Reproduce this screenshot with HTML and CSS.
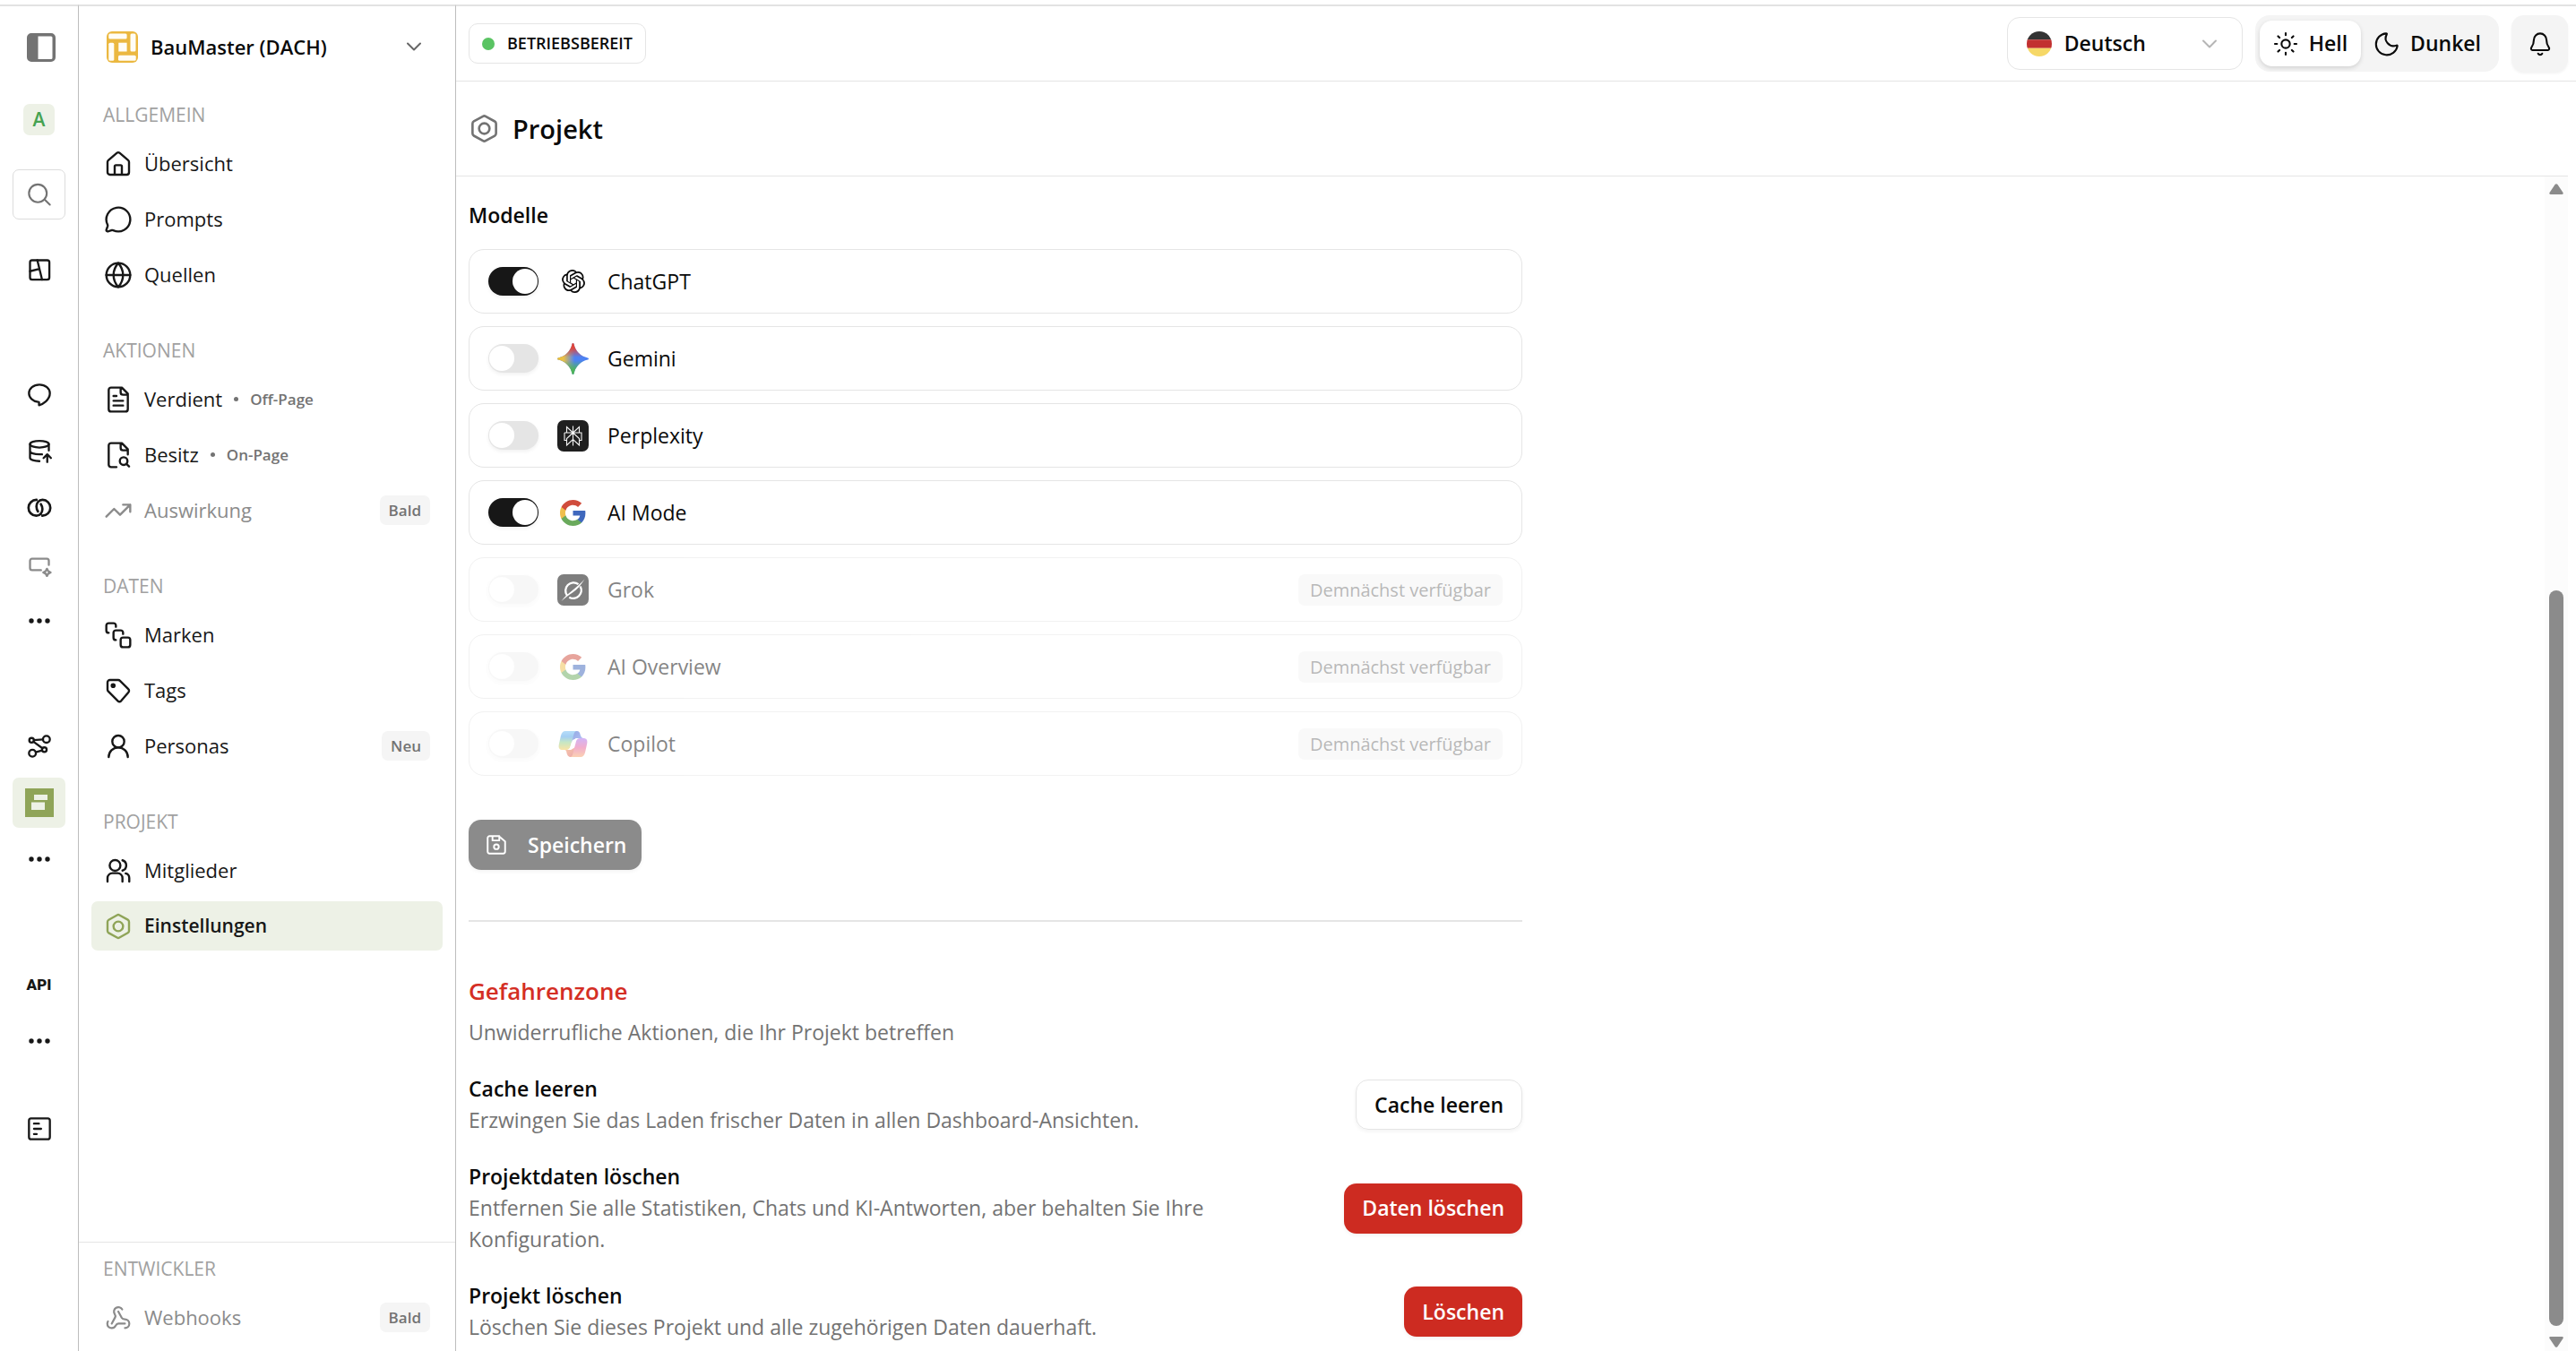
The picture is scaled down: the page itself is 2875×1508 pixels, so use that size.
FILE: index.html
```html
<!DOCTYPE html>
<html lang="de">
<head>
<meta charset="utf-8">
<meta name="viewport" content="width=device-width, initial-scale=1">
<title>Projekt – Einstellungen</title>
<link rel="stylesheet" href="styles.css">
</head>
<body>
<svg class="defs" aria-hidden="true">
  <defs>
    <symbol id="i-dots" viewBox="0 0 28 28"><g fill="currentColor" stroke="none"><circle cx="5" cy="14" r="2.7"/><circle cx="14" cy="14" r="2.7"/><circle cx="23" cy="14" r="2.7"/></g></symbol>
    <symbol id="i-nut" viewBox="0 0 24 24"><path d="M11 2.6a2 2 0 0 1 2 0l7 3.9a2 2 0 0 1 1 1.7v7.6a2 2 0 0 1-1 1.7l-7 3.9a2 2 0 0 1-2 0l-7-3.9a2 2 0 0 1-1-1.7V8.200a2 2 0 0 1 1-1.700z"/><circle cx="12" cy="12" r="4"/></symbol>
    <symbol id="i-chevron" viewBox="0 0 24 24"><path d="m5 8.500 7 7 7-7"/></symbol>
    <symbol id="i-google" viewBox="0 0 24 24"><g stroke="none"><path fill="#3f68bd" d="M23.500 12.270c0-.79-.07-1.540-.19-2.270H12v4.510h6.470c-.29 1.480-1.140 2.730-2.400 3.580v3h3.860c2.260-2.090 3.570-5.170 3.570-8.820z"/><path fill="#6aaa5c" d="M12 24c3.240 0 5.950-1.080 7.930-2.910l-3.860-3c-1.080.72-2.450 1.160-4.070 1.160-3.130 0-5.780-2.110-6.730-4.960H1.290v3.090C3.260 21.300 7.310 24 12 24z"/><path fill="#efbf4c" d="M5.270 14.290c-.25-.72-.38-1.490-.38-2.290s.14-1.570.38-2.290V6.620H1.290C.470 8.240 0 10.060 0 12s.470 3.760 1.290 5.380l3.980-3.090z"/><path fill="#d04c3c" d="M12 4.750c1.770 0 3.350.61 4.600 1.800l3.420-3.420C17.950 1.190 15.240 0 12 0 7.310 0 3.260 2.700 1.290 6.620l3.980 3.090c.95-2.850 3.600-4.960 6.730-4.960z"/></g></symbol>
    <path id="star" d="M12 0c.4 0 .6.300.7.700A13.500 13.500 0 0 0 23.300 11.300c.4.1.7.300.7.700s-.300.600-.700.700A13.500 13.500 0 0 0 12.700 23.300c-.1.400-.300.700-.700.700s-.600-.300-.700-.700A13.500 13.500 0 0 0 .700 12.700C.300 12.600 0 12.400 0 12s.300-.600.700-.700A13.500 13.500 0 0 0 11.300.700c.1-.4.300-.7.700-.7z"/>
    <linearGradient id="g-red" x1="0" y1="0" x2="0" y2="1"><stop offset="0" stop-color="#e0453a"/><stop offset=".15" stop-color="#e0453a"/><stop offset=".45" stop-color="#e0453a" stop-opacity="0"/></linearGradient>
    <linearGradient id="g-green" x1="0" y1="1" x2="0" y2="0"><stop offset="0" stop-color="#4fb45a"/><stop offset=".15" stop-color="#4fb45a"/><stop offset=".45" stop-color="#4fb45a" stop-opacity="0"/></linearGradient>
    <linearGradient id="g-yellow" x1="0" y1="0" x2="1" y2="0"><stop offset="0" stop-color="#f0c02e"/><stop offset=".2" stop-color="#e8bf4a"/><stop offset=".55" stop-color="#e8c24c" stop-opacity="0"/></linearGradient>
    <linearGradient id="c-left" x1="0" y1="0" x2="0" y2="1"><stop offset="0" stop-color="#6fbcf5"/><stop offset=".3" stop-color="#4ca0e8"/><stop offset=".6" stop-color="#8fd08a"/><stop offset="1" stop-color="#f6c94e"/></linearGradient>
    <linearGradient id="c-right" x1="0" y1="0" x2="0" y2="1"><stop offset="0" stop-color="#a66bf0"/><stop offset=".5" stop-color="#e65f9a"/><stop offset="1" stop-color="#f8a567"/></linearGradient>
    <linearGradient id="c-top" x1="0" y1="0" x2="1" y2="1"><stop offset="0" stop-color="#2a56c8"/><stop offset="1" stop-color="#6f8af0"/></linearGradient>
    <linearGradient id="c-bottom" x1="0" y1="0" x2="1" y2="1"><stop offset="0" stop-color="#f29a55"/><stop offset="1" stop-color="#d94d5c"/></linearGradient>
    <clipPath id="round"><circle cx="14" cy="14" r="14"/></clipPath>
  </defs>
</svg>

<div class="app">
  <nav class="rail" aria-label="Arbeitsbereich">
    <button class="rail-btn rail-panel" type="button" aria-label="Seitenleiste umschalten">
      <svg width="32" height="32" viewBox="0 0 32 32"><path fill="#737373" fill-rule="evenodd" d="M5 0h22a5 5 0 0 1 5 5v22a5 5 0 0 1-5 5H5a5 5 0 0 1-5-5V5a5 5 0 0 1 5-5zm7.500 3.500v25.500H27a1.500 1.500 0 0 0 1.500-1.500V5A1.500 1.500 0 0 0 27 3.500z"/></svg>
    </button>
    <button class="avatar" type="button">A</button>
    <button class="rail-btn rail-search" type="button" aria-label="Suche">
      <svg class="icon" width="28" height="28" viewBox="0 0 24 24"><circle cx="10.500" cy="11" r="8.500"/><path d="m17 17 5 4.800"/></svg>
    </button>
    <button class="rail-btn" type="button" aria-label="Layout">
      <svg class="icon rail-icon" width="28" height="28" viewBox="0 0 24 24"><rect x="3" y="3" width="18.500" height="18.500" rx="2"/><path d="M10 3l4.500 18.500M3 13.500l9-2.200"/></svg>
    </button>
    <div class="rail-group">
      <button class="rail-btn" type="button" aria-label="Chats">
        <svg class="icon rail-icon" width="28" height="28" viewBox="0 0 24 24"><path d="M12 2C6.300 2 2 5.700 2 10.300c0 4.200 3.600 7.500 8.600 8.200l1 .2v3c3.500-1 10.400-5 10.400-11.400C22 5.700 17.700 2 12 2z"/></svg>
      </button>
      <button class="rail-btn" type="button" aria-label="Datenbank">
        <svg class="icon rail-icon" width="28" height="28" viewBox="0 0 24 24"><ellipse cx="12" cy="5" rx="9" ry="3.200"/><path d="M3 5v13c0 1.800 4 3.200 9 3.200M21 5v6M3 11.500c0 1.800 4 3.200 9 3.200h2.500M19.500 22v-7M16 18.200l3.500-3.500 3.500 3.500"/></svg>
      </button>
      <button class="rail-btn" type="button" aria-label="Verknüpfungen">
        <svg class="icon rail-icon" width="32" height="32" viewBox="0 0 24 24"><path d="M9.600 5.200a6.600 6.600 0 1 0-.2 13.300c3.300 0 5.100-2.800 5.100-5.500 0-1.800-.6-3.200-1.300-4.200M14.400 18.500a6.600 6.600 0 1 0 .2-13.300c-3.300 0-5.100 2.800-5.100 5.500 0 1.800.6 3.200 1.300 4.200"/></svg>
      </button>
      <button class="rail-btn rail-muted" type="button" aria-label="Assistent">
        <svg class="icon rail-icon" width="28" height="28" viewBox="0 0 24 24"><path d="M13.500 17.500H5a2 2 0 0 1-2-2V8.500a2 2 0 0 1 2-2h14a2 2 0 0 1 2 2v4"/><path d="M19.200 16.200l1.200 2.300 2.300 1.200-2.300 1.200-1.200 2.300-1.200-2.300-2.300-1.200 2.300-1.200z"/></svg>
      </button>
      <button class="rail-btn" type="button" aria-label="Mehr"><svg width="28" height="28"><use href="#i-dots"/></svg></button>
    </div>
    <div class="rail-group">
      <button class="rail-btn" type="button" aria-label="Abläufe">
        <svg class="icon rail-icon" width="28" height="28" viewBox="0 0 24 24"><circle cx="4.500" cy="6.300" r="2.200"/><circle cx="18.700" cy="5.300" r="3.300"/><circle cx="5.300" cy="18.600" r="3.300"/><circle cx="16.700" cy="15.300" r="2.200"/><path d="M6.700 6.100l8.700-.6M6.300 7.600l8.600 6.300M8.500 17.600l6-1.700"/></svg>
      </button>
      <button class="rail-btn rail-active" type="button" aria-label="Projekt" aria-current="true">
        <svg width="32" height="32" viewBox="0 0 32 32"><path fill="#8fa458" d="M0 0h32v32H0z"/><path fill="#edf1e6" d="M10 7h15v6H10zM7 15.500h15V24H7z"/></svg>
      </button>
      <button class="rail-btn" type="button" aria-label="Mehr"><svg width="28" height="28"><use href="#i-dots"/></svg></button>
    </div>
    <div class="rail-group">
      <button class="rail-btn rail-api" type="button">API</button>
      <button class="rail-btn" type="button" aria-label="Mehr"><svg width="28" height="28"><use href="#i-dots"/></svg></button>
    </div>
    <button class="rail-btn rail-last" type="button" aria-label="Protokoll">
      <svg class="icon rail-icon" width="28" height="28" viewBox="0 0 24 24"><rect x="2" y="2" width="20" height="20" rx="2"/><path d="M6.800 7h4.700M6.800 12h6.800M6.800 17h2.600"/></svg>
    </button>
  </nav>

  <aside class="sidebar">
    <button class="project-switch" type="button">
      <svg width="35" height="35" viewBox="0 0 35 35"><rect width="35" height="35" rx="6" fill="#ebb840"/><g fill="#fffdf6"><rect x="2.300" y="2.500" width="20.300" height="6" rx="1.500"/><rect x="26.500" y="2.500" width="6" height="20" rx="1.500"/><rect x="2.300" y="12.700" width="6" height="20" rx="1.500"/><rect x="13.300" y="12.700" width="9.300" height="9.800"/><rect x="13" y="26.700" width="19.700" height="6" rx="1.500"/></g></svg>
      <span>BauMaster (DACH)</span>
      <svg class="icon switch-chevron" width="24" height="24"><use href="#i-chevron"/></svg>
    </button>
    <div class="nav-groups">
      <section class="nav-group">
        <h2>Allgemein</h2>
        <a class="nav-item" href="#uebersicht"><svg class="icon" width="32" height="32" viewBox="0 0 24 24"><path d="M3 10.500a2 2 0 0 1 .7-1.600l7-6a2 2 0 0 1 2.600 0l7 6a2 2 0 0 1 .7 1.600V19a2 2 0 0 1-2 2H5a2 2 0 0 1-2-2zM9 21v-7a1 1 0 0 1 1-1h4a1 1 0 0 1 1 1v7"/></svg><span>Übersicht</span></a>
        <a class="nav-item" href="#prompts"><svg class="icon" width="32" height="32" viewBox="0 0 24 24"><path d="M3 16.340a2 2 0 0 1 .1 1.170l-1.070 3.290a1 1 0 0 0 1.240 1.170l3.410-1a2 2 0 0 1 1.100.09A10 10 0 1 0 3 16.340"/></svg><span>Prompts</span></a>
        <a class="nav-item" href="#quellen"><svg class="icon" width="32" height="32" viewBox="0 0 24 24"><circle cx="12" cy="12" r="10"/><path d="M12 2c-5.300 6-5.300 14 0 20 5.300-6 5.300-14 0-20M2 12h20"/></svg><span>Quellen</span></a>
      </section>
      <section class="nav-group">
        <h2>Aktionen</h2>
        <a class="nav-item" href="#verdient"><svg class="icon" width="32" height="32" viewBox="0 0 24 24"><path d="M15 2H6a2 2 0 0 0-2 2v16a2 2 0 0 0 2 2h12a2 2 0 0 0 2-2V7zM14 2v4a2 2 0 0 0 2 2h4M8 9h2.500M8 13h8M8 17h8"/></svg><span>Verdient</span><i class="dot"></i><small>Off-Page</small></a>
        <a class="nav-item" href="#besitz"><svg class="icon" width="32" height="32" viewBox="0 0 24 24"><path d="M14 2v4a2 2 0 0 0 2 2h4M10.500 22H6a2 2 0 0 1-2-2V4a2 2 0 0 1 2-2h9l5 5v4.500M21 21.500 18.800 19.300"/><circle cx="16.500" cy="17" r="3.200"/></svg><span>Besitz</span><i class="dot"></i><small>On-Page</small></a>
        <a class="nav-item nav-soon" href="#auswirkung"><svg class="icon" width="32" height="32" viewBox="0 0 24 24"><path d="M16 7h6v6M22 7l-8.500 8.500-5-5L2 17"/></svg><span>Auswirkung</span><b class="badge">Bald</b></a>
      </section>
      <section class="nav-group">
        <h2>Daten</h2>
        <a class="nav-item" href="#marken"><svg class="icon" width="32" height="32" viewBox="0 0 24 24"><rect x="14" y="14" width="8" height="8" rx="2"/><path d="M10 5V4a2 2 0 0 0-2-2H4a2 2 0 0 0-2 2v4a2 2 0 0 0 2 2M16 11v-1a2 2 0 0 0-2-2h-4a2 2 0 0 0-2 2v4a2 2 0 0 0 2 2"/></svg><span>Marken</span></a>
        <a class="nav-item" href="#tags"><svg class="icon" width="32" height="32" viewBox="0 0 24 24"><path d="M12 3a2 2 0 0 1 1.400.6l7 7a2 2 0 0 1 0 2.900l-6 7a2 2 0 0 1-2.800 0l-8-8A2 2 0 0 1 3 11V5a2 2 0 0 1 2-2z"/><circle cx="7.700" cy="7.700" r="1.200" fill="currentColor"/></svg><span>Tags</span></a>
        <a class="nav-item" href="#personas"><svg class="icon" width="32" height="32" viewBox="0 0 24 24"><circle cx="12" cy="8" r="5"/><path d="M20 21a8 8 0 0 0-16 0"/></svg><span>Personas</span><b class="badge">Neu</b></a>
      </section>
      <section class="nav-group">
        <h2>Projekt</h2>
        <a class="nav-item" href="#mitglieder"><svg class="icon" width="32" height="32" viewBox="0 0 24 24"><path d="M15.500 21v-3a4 4 0 0 0-4-4H7a4 4 0 0 0-4 4v3M15.500 3.200a4.500 4.500 0 0 1 0 8.600M21.200 21v-3a4 4 0 0 0-3-3.800"/><circle cx="9.300" cy="7.500" r="4.500"/></svg><span>Mitglieder</span></a>
        <a class="nav-item nav-current" href="#einstellungen" aria-current="page"><svg class="icon" width="32" height="32"><use href="#i-nut"/></svg><span>Einstellungen</span></a>
      </section>
    </div>
    <section class="nav-group nav-footer">
      <h2>Entwickler</h2>
      <a class="nav-item nav-soon" href="#webhooks"><svg class="icon" width="32" height="32" viewBox="0 0 24 24"><g transform="translate(1 1.200) scale(.92)"><path d="M18 16.980h-5.990c-1.100 0-1.950.94-2.480 1.900A4 4 0 0 1 2 17c.01-.7.200-1.400.57-2"/><path d="m6 17 3.130-5.780c.53-.97.100-2.180-.5-3.100a4 4 0 1 1 6.890-4.060"/><path d="m12 6 3.130 5.730C15.660 12.700 16.900 13 18 13a4 4 0 0 1 0 8"/></g></svg><span>Webhooks</span><b class="badge">Bald</b></a>
    </section>
  </aside>

  <main class="main">
    <header class="topbar">
      <div class="status"><i></i>BETRIEBSBEREIT</div>
      <div class="tools">
        <div class="language">
          <svg width="28" height="28" viewBox="0 0 28 28"><g clip-path="url(#round)"><path fill="#333" d="M0 0h28v9.300H0z"/><path fill="#c23030" d="M0 9.300h28v9.400H0z"/><path fill="#f6d867" d="M0 18.700h28V28H0z"/></g></svg>
          <select aria-label="Sprache"><option>Deutsch</option><option>English</option></select>
          <svg class="icon language-chevron" width="24" height="24"><use href="#i-chevron"/></svg>
        </div>
        <div class="theme" role="group" aria-label="Farbschema">
          <button class="theme-on" type="button" aria-pressed="true"><svg class="icon" width="28" height="28" viewBox="0 0 24 24"><circle cx="12" cy="12" r="4"/><path d="M12 1.700v2M12 20.300v2M1.700 12h2M20.300 12h2M4.700 4.700l1.400 1.400M17.900 17.900l1.400 1.400M4.700 19.300l1.400-1.400M17.900 6.100l1.400-1.400"/></svg>Hell</button>
          <button type="button" aria-pressed="false"><svg class="icon" width="28" height="28" viewBox="0 0 24 24"><path d="M22 14A10.300 10.300 0 1 1 11.200 2c.7 0 .9.300.6.900A7.400 7.400 0 0 0 21 13.400c.7-.3 1.100-.1 1 .6z"/></svg>Dunkel</button>
        </div>
        <button class="bell" type="button" aria-label="Benachrichtigungen"><svg class="icon" width="28" height="28" viewBox="0 0 24 24"><path d="M12 2a6 6 0 0 0-6 6c0 4-1 5.700-2.400 7.600-.6.900-.2 2.400 1 2.400h14.800c1.200 0 1.600-1.500 1-2.400C19 13.700 18 12 18 8a6 6 0 0 0-6-6zM10 21.300a2.300 2.300 0 0 0 4 0"/></svg></button>
      </div>
    </header>

    <div class="page">
      <div class="page-title">
        <svg class="icon" width="35" height="35"><use href="#i-nut"/></svg>
        <h1>Projekt</h1>
      </div>
      <div class="page-body">
        <form class="settings">
          <h2 class="section-title">Modelle</h2>
          <ul class="models">
            <li><label class="model"><input type="checkbox" role="switch" checked><span class="logo"><svg width="26" height="26" viewBox="0 0 24 24"><path fill="#0a0a0a" d="M22.2819 9.8211a5.9847 5.9847 0 0 0-.5157-4.9108 6.0462 6.0462 0 0 0-6.5098-2.9A6.0651 6.0651 0 0 0 4.9807 4.1818a5.9847 5.9847 0 0 0-3.9977 2.9 6.0462 6.0462 0 0 0 .7427 7.0966 5.98 5.98 0 0 0 .511 4.9107 6.051 6.051 0 0 0 6.5146 2.9001A5.9847 5.9847 0 0 0 13.2599 24a6.0557 6.0557 0 0 0 5.7718-4.2058 5.9894 5.9894 0 0 0 3.9977-2.9001 6.0557 6.0557 0 0 0-.7475-7.0729zm-9.022 12.6081a4.4755 4.4755 0 0 1-2.8764-1.0408l.1419-.0804 4.7783-2.7582a.7948.7948 0 0 0 .3927-.6813v-6.7369l2.02 1.1686a.071.071 0 0 1 .038.052v5.5826a4.504 4.504 0 0 1-4.4945 4.4944zm-9.6607-4.1254a4.4708 4.4708 0 0 1-.5346-3.0137l.142.0852 4.783 2.7582a.7712.7712 0 0 0 .7806 0l5.8428-3.3685v2.3324a.0804.0804 0 0 1-.0332.0615L9.74 19.9502a4.4992 4.4992 0 0 1-6.1408-1.6464zM2.3408 7.8956a4.485 4.485 0 0 1 2.3655-1.9728V11.6a.7664.7664 0 0 0 .3879.6765l5.8144 3.3543-2.0201 1.1685a.0757.0757 0 0 1-.071 0l-4.8303-2.7865A4.504 4.504 0 0 1 2.3408 7.872zm16.5963 3.8558L13.1038 8.364 15.1192 7.2a.0757.0757 0 0 1 .071 0l4.8303 2.7913a4.4944 4.4944 0 0 1-.6765 8.1042v-5.6772a.79.79 0 0 0-.407-.667zm2.0107-3.0231l-.142-.0852-4.7735-2.7818a.7759.7759 0 0 0-.7854 0L9.409 9.2297V6.8974a.0662.0662 0 0 1 .0284-.0615l4.8303-2.7866a4.4992 4.4992 0 0 1 6.6802 4.66zM8.3065 12.863l-2.02-1.1638a.0804.0804 0 0 1-.038-.0567V6.0742a4.4992 4.4992 0 0 1 7.3757-3.4537l-.142.0805L8.704 5.459a.7948.7948 0 0 0-.3927.6813zm1.0976-2.3654l2.602-1.4998 2.6069 1.4998v2.9994l-2.5974 1.4997-2.6067-1.4997Z"/></svg></span><span>ChatGPT</span></label></li>
            <li><label class="model"><input type="checkbox" role="switch"><span class="logo"><svg width="35" height="35" viewBox="0 0 24 24"><use href="#star" fill="#4d82f3"/><use href="#star" fill="url(#g-yellow)"/><use href="#star" fill="url(#g-red)"/><use href="#star" fill="url(#g-green)"/></svg></span><span>Gemini</span></label></li>
            <li><label class="model"><input type="checkbox" role="switch"><span class="logo"><svg width="35" height="35" viewBox="0 0 35 35"><rect width="35" height="35" rx="7" fill="#1f1f1f"/><path fill="none" stroke="#f4f4f4" stroke-width="1.100" d="M17.500 6.500v22M17.500 14l-7-6.500V14M17.500 14l7-6.500V14M8 14h19v8.500h-2.500M8 14v8.500h2.500M17.500 14l-7 6.500v7.500l7-6.500 7 6.500v-7.500z"/></svg></span><span>Perplexity</span></label></li>
            <li><label class="model"><input type="checkbox" role="switch" checked><span class="logo"><svg width="29" height="29"><use href="#i-google"/></svg></span><span>AI Mode</span></label></li>
            <li><label class="model model-off"><input type="checkbox" role="switch" disabled><span class="logo"><svg width="35" height="35" viewBox="0 0 35 35"><rect width="35" height="35" rx="7" fill="#000"/><g fill="none" stroke="#fff" stroke-width="2.400"><path d="M11 23.800a9 9 0 0 1 12.500-12.700M25.600 13.500A9 9 0 0 1 13.300 25.700"/></g><path fill="#fff" d="M30.500 5.500C26 12.500 22 17.200 17 20.500c-4 2.700-8 5.500-12.500 9.500 4-5.500 8-8.500 12-11.800C21 14.500 25.500 11 30.500 5.500z"/></svg></span><span>Grok</span><b class="model-badge">Demnächst verfügbar</b></label></li>
            <li><label class="model model-off"><input type="checkbox" role="switch" disabled><span class="logo"><svg width="29" height="29"><use href="#i-google"/></svg></span><span>AI Overview</span><b class="model-badge">Demnächst verfügbar</b></label></li>
            <li><label class="model model-off"><input type="checkbox" role="switch" disabled><span class="logo"><svg width="35" height="35" viewBox="0 0 35 35"><path fill="url(#c-top)" d="M17 3h5c2 0 3 1.500 3.500 3.500S27 11 29 11h-8.500L16 16z"/><path fill="url(#c-bottom)" d="M8 24c2 0 2 1.500 2.500 3.500S12 32 15 32h3l4-12-7 4z"/><path fill="url(#c-left)" d="M9 3h13c-2 0-3 1.500-3.500 3.500l-4 14c-.7 2.300-2 3.500-4.500 3.500H6c-3.500 0-5-2-4.200-6L4 8c1-3.500 2.500-5 5-5z"/><path fill="url(#c-right)" d="M26 32H14c2 0 2.800-1.500 3.300-3.500l3.700-14c.7-2.300 2-3.500 4.500-3.500H29c3.500 0 5 2 4.200 6L31 27c-1 3.500-2.500 5-5 5z"/><path fill="#fff" d="M20.500 12c-1 1-1.500 2-2 4l-1.500 5c-.6 1.800-1.500 3-4 3h-1.500c2-.5 2.500-2 3-3.500l1.500-5c.6-2 1.500-3.500 4.500-3.500z"/></svg></span><span>Copilot</span><b class="model-badge">Demnächst verfügbar</b></label></li>
          </ul>
          <button class="btn btn-save" type="submit" disabled>
            <svg class="icon" width="26" height="26" viewBox="0 0 24 24"><path d="M14.500 3H5a2 2 0 0 0-2 2v14a2 2 0 0 0 2 2h14a2 2 0 0 0 2-2V8.500zM8 3v4.500h7V3"/><circle cx="12" cy="14" r="2.500"/></svg>Speichern</button>
        </form>
        <section class="danger">
          <h2>Gefahrenzone</h2>
          <p class="hint">Unwiderrufliche Aktionen, die Ihr Projekt betreffen</p>
          <div class="danger-row">
            <div class="danger-text"><h3>Cache leeren</h3><p>Erzwingen Sie das Laden frischer Daten in allen Dashboard-Ansichten.</p></div>
            <button class="btn btn-outline" type="button">Cache leeren</button>
          </div>
          <div class="danger-row">
            <div class="danger-text"><h3>Projektdaten löschen</h3><p>Entfernen Sie alle Statistiken, Chats und KI-Antworten, aber behalten Sie Ihre Konfiguration.</p></div>
            <button class="btn btn-red" type="button">Daten löschen</button>
          </div>
          <div class="danger-row">
            <div class="danger-text"><h3>Projekt löschen</h3><p>Löschen Sie dieses Projekt und alle zugehörigen Daten dauerhaft.</p></div>
            <button class="btn btn-red" type="button">Löschen</button>
          </div>
        </section>
        <div class="scrollbar" aria-hidden="true">
          <svg width="16" height="12" viewBox="0 0 16 12"><path d="M6.500 1a2 2 0 0 1 3 0l6 9c.6 1 0 2-1 2h-13c-1 0-1.600-1-1-2z"/></svg>
          <span class="thumb"></span>
          <svg width="16" height="12" viewBox="0 0 16 12"><path d="M6.500 11a2 2 0 0 0 3 0l6-9c.6-1 0-2-1-2h-13c-1 0-1.600 1-1 2z"/></svg>
        </div>
      </div>
    </div>
  </main>
</div>
</body>
</html>
```
FILE: styles.css
```css
* { box-sizing: border-box; }

body {
  margin: 0;
  background: #fff;
  color: #0a0a0a;
  font-family: "Open Sans", "Noto Sans", sans-serif;
  font-size: 23px;
  line-height: 35px;
}

h1, h2, h3, p, ul { margin: 0; padding: 0; }
h1, h2, h3 { font-weight: 600; }
ul { list-style: none; }
a { color: inherit; text-decoration: none; }

button, select {
  font: inherit;
  color: inherit;
  border: 0;
  background: none;
  padding: 0;
}

svg { display: block; flex: none; }
.defs { position: absolute; width: 0; height: 0; }

.icon {
  fill: none;
  stroke: currentColor;
  stroke-width: 1.8;
  stroke-linecap: round;
  stroke-linejoin: round;
}

.app {
  display: flex;
  height: 100vh;
  min-height: 1000px;
  padding-top: 5px;
  overflow: hidden;
}

.rail, .sidebar, .main { border-top: 2px solid #e2e2e2; }

/* Icon rail */
.rail {
  display: flex;
  flex: none;
  flex-direction: column;
  align-items: center;
  width: 88px;
  padding-top: 18px;
  border-right: 1px solid #bdbdbd;
  color: #171717;
}

.rail-btn {
  display: flex;
  flex: none;
  align-items: center;
  justify-content: center;
  width: 59px;
  height: 56px;
  border-radius: 7px;
}

.rail-icon { stroke-width: 2; }
.rail-panel { margin-left: 5px; }

.avatar {
  flex: none;
  width: 35px;
  height: 35px;
  margin: 35px 0 38px;
  border-radius: 7px;
  background: #edf1e6;
  color: #45a251;
  font-size: 21px;
  font-weight: 600;
}

.rail-search {
  margin-bottom: 28px;
  border: 1px solid #dcdcdc;
  color: #737373;
}

.rail-group {
  display: flex;
  flex: none;
  flex-direction: column;
  gap: 7px;
  margin-top: 84px;
}

.rail-muted { color: #8b8b8b; }
.rail-active { background: #edf1e6; }

.rail-api {
  font-family: Roboto, "Liberation Sans", sans-serif;
  font-size: 17px;
  font-weight: 900;
}

.rail-last { margin-top: 42px; }

/* Sidebar */
.sidebar {
  display: flex;
  flex: none;
  flex-direction: column;
  width: 421px;
  border-right: 1px solid #bdbdbd;
}

.project-switch {
  display: flex;
  align-items: center;
  gap: 14px;
  height: 90px;
  padding: 0 34px 0 31px;
  font-size: 22px;
  font-weight: 600;
}

.switch-chevron {
  margin-left: auto;
  color: #666;
  stroke-width: 2;
}

.nav-groups {
  display: flex;
  flex: 1;
  flex-direction: column;
  gap: 43px;
  padding: 17px 14px 0;
}

.nav-group {
  display: flex;
  flex-direction: column;
  gap: 7px;
}

.nav-group h2 {
  margin-bottom: 6px;
  padding-left: 13px;
  color: #a1a1a1;
  font-size: 21px;
  font-weight: 400;
  line-height: 28px;
  text-transform: uppercase;
}

.nav-item {
  display: flex;
  align-items: center;
  gap: 13px;
  height: 55px;
  padding: 0 14px;
  border-radius: 7px;
  color: #171717;
  font-size: 22px;
}

.nav-item small {
  color: #737373;
  font-size: 17px;
  font-weight: 600;
}

.nav-item .dot {
  width: 5px;
  height: 5px;
  border-radius: 50%;
  background: #737373;
}

.nav-soon { color: #8b8b8b; }

.nav-current {
  background: #edf1e6;
  font-size: 21px;
  font-weight: 600;
}

.nav-current .icon { color: #8fa458; }

.badge {
  margin-left: auto;
  padding: 0 10px;
  border-radius: 7px;
  background: #f5f5f5;
  color: #737373;
  font-size: 17px;
  font-weight: 600;
  line-height: 33px;
}

.nav-footer {
  padding: 15px 14px 10px;
  border-top: 1px solid #e5e5e5;
}

/* Main column */
.main {
  display: flex;
  flex: 1;
  flex-direction: column;
  min-width: 0;
}

.topbar {
  display: flex;
  flex: none;
  align-items: center;
  justify-content: space-between;
  height: 84px;
  padding: 0 9px 0 14px;
  border-bottom: 1px solid #e5e5e5;
}

.status {
  display: flex;
  align-items: center;
  gap: 14px;
  height: 45px;
  padding: 0 14px;
  border: 1px solid #e5e5e5;
  border-radius: 10px;
  font-size: 18px;
  font-weight: 600;
}

.status i {
  width: 14px;
  height: 14px;
  border-radius: 50%;
  background: #5ac463;
}

.tools {
  display: flex;
  align-items: center;
  gap: 14px;
  font-weight: 600;
}

.language {
  display: flex;
  position: relative;
  align-items: center;
  width: 263px;
  height: 59px;
  padding-left: 21px;
  border: 1px solid #e5e5e5;
  border-radius: 14px;
}

.language select {
  flex: 1;
  height: 100%;
  padding-left: 14px;
  appearance: none;
}

.language-chevron {
  position: absolute;
  right: 24px;
  color: #b5b5b5;
  stroke-width: 2;
  pointer-events: none;
}

.theme {
  display: flex;
  height: 63px;
  padding: 6px 5px;
  border-radius: 16px;
  background: #f4f4f4;
}

.theme button {
  display: flex;
  align-items: center;
  gap: 12px;
  padding: 0 15px;
  border-radius: 14px;
}

.theme .theme-on {
  background: #fff;
  box-shadow: 0 2px 5px rgba(0, 0, 0, .14);
}

.bell {
  display: flex;
  align-items: center;
  justify-content: center;
  width: 63px;
  height: 63px;
  border-radius: 14px;
  background: #f4f4f4;
  box-shadow: 0 2px 3px rgba(0, 0, 0, .05);
}

.page {
  display: flex;
  flex: 1;
  flex-direction: column;
  min-height: 0;
  margin-right: 9px;
}

.page-title {
  display: flex;
  flex: none;
  align-items: center;
  gap: 14px;
  height: 106px;
  padding-left: 14px;
  border-bottom: 1px solid #e5e5e5;
}

.page-title .icon { color: #737373; }

.page-title h1 {
  font-size: 29px;
  line-height: 42px;
}

.page-body {
  position: relative;
  flex: 1;
  min-height: 0;
  padding: 26px 40px 10px 14px;
  overflow: hidden;
}

.settings, .danger { max-width: 1176px; }

.section-title {
  margin-bottom: 20px;
  font-size: 23px;
}

.models {
  display: flex;
  flex-direction: column;
  gap: 14px;
}

.model {
  display: flex;
  align-items: center;
  gap: 21px;
  height: 72px;
  padding: 0 21px;
  border: 1px solid #e5e5e5;
  border-radius: 17px;
}

.model input {
  display: flex;
  flex: none;
  align-items: center;
  width: 56px;
  height: 32px;
  margin: 0;
  padding: 0 1px;
  border-radius: 16px;
  background: #e5e5e5;
  box-shadow: 0 2px 4px rgba(0, 0, 0, .06);
  appearance: none;
}

.model input::before {
  width: 28px;
  height: 28px;
  border-radius: 50%;
  background: #fff;
  content: "";
}

.model input:checked {
  justify-content: flex-end;
  background: #171717;
}

.logo {
  display: flex;
  flex: none;
  align-items: center;
  justify-content: center;
  width: 35px;
  height: 35px;
}

.model-off { opacity: .5; }
.model-off input { opacity: .5; }

.model-badge {
  margin-left: auto;
  padding: 0 13px;
  border-radius: 7px;
  background: #f5f5f5;
  color: #737373;
  font-size: 20px;
  font-weight: 400;
}

.btn {
  display: flex;
  flex: none;
  align-items: center;
  justify-content: center;
  height: 56px;
  padding: 0 20px;
  border-radius: 14px;
  font-weight: 600;
  box-shadow: 0 2px 4px rgba(0, 0, 0, .05);
}

.btn-save {
  gap: 22px;
  margin-top: 49px;
  padding: 0 17px 0 18px;
  background: #8b8b8b;
  color: #fff;
}

.btn-outline { border: 1px solid #e5e5e5; }

.btn-red {
  background: #cd2b21;
  color: #fff;
}

.danger {
  display: flex;
  flex-direction: column;
  gap: 28px;
  margin-top: 56px;
  padding-top: 56px;
  border-top: 2px solid #e5e5e5;
}

.danger > h2 {
  margin-bottom: -20px;
  color: #d42e24;
  font-size: 26px;
  line-height: 42px;
}

.danger-row {
  display: flex;
  align-items: center;
  justify-content: space-between;
  gap: 28px;
}

.danger-text { max-width: 896px; }
.danger-text h3 { font-size: 23px; }
.danger p { color: #737373; }

/* Scrollbar drawn over the right edge of the page body */
.scrollbar {
  display: flex;
  position: absolute;
  top: 0;
  right: 0;
  bottom: 0;
  flex-direction: column;
  align-items: center;
  justify-content: space-between;
  width: 26px;
  padding: 8px 0 4px;
  background: #fcfcfc;
  fill: #8b8b8b;
}

.thumb {
  height: 63.2%;
  width: 16px;
  margin: auto 0 12px;
  border-radius: 8px;
  background: #8b8b8b;
}
```
